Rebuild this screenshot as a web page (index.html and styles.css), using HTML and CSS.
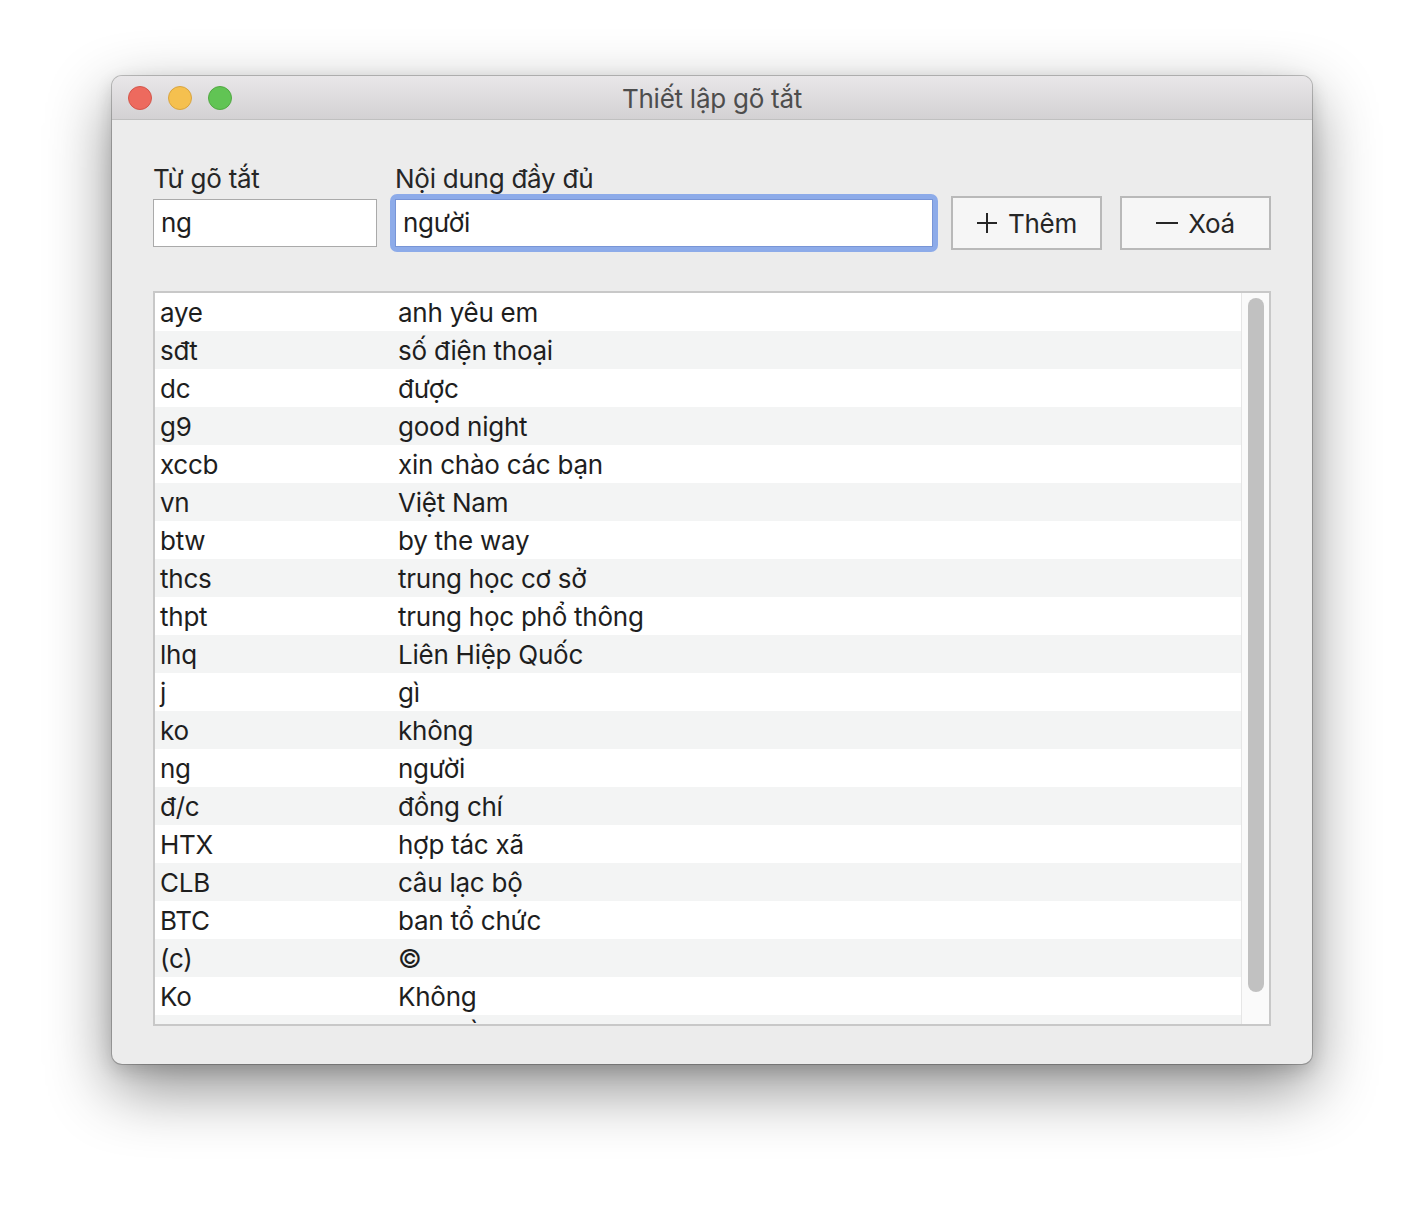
FILE: index.html
```html
<!DOCTYPE html>
<html lang="vi">
<head>
<meta charset="utf-8">
<title>Thiết lập gõ tắt</title>
<link rel="stylesheet" href="styles.css">
</head>
<body>
<div class="window">
  <div class="titlebar">
    <div class="lights">
      <span class="light red"></span>
      <span class="light yellow"></span>
      <span class="light green"></span>
    </div>
    <div class="title">Thiết lập gõ tắt</div>
  </div>
  <div class="content">
    <div class="form">
      <label class="label">Từ gõ tắt</label>
      <label class="label">Nội dung đầy đủ</label>
      <span></span>
      <span></span>
      <div class="input">ng</div>
      <div class="focus-ring"><div class="input focused">người</div></div>
      <button class="btn"><svg width="22" height="22" viewBox="0 0 22 22"><path d="M11 1V21M1 11H21" stroke="#262626" stroke-width="2" fill="none"/></svg><span>Thêm</span></button>
      <button class="btn"><svg width="22" height="22" viewBox="0 0 22 22"><path d="M0 11H22" stroke="#262626" stroke-width="2" fill="none"/></svg><span>Xoá</span></button>
    </div>
    <div class="list">
      <div class="rows">
        <div class="row"><span class="c1">aye</span><span>anh yêu em</span></div>
        <div class="row"><span class="c1">sđt</span><span>số điện thoại</span></div>
        <div class="row"><span class="c1">dc</span><span>được</span></div>
        <div class="row"><span class="c1">g9</span><span>good night</span></div>
        <div class="row"><span class="c1">xccb</span><span>xin chào các bạn</span></div>
        <div class="row"><span class="c1">vn</span><span>Việt Nam</span></div>
        <div class="row"><span class="c1">btw</span><span>by the way</span></div>
        <div class="row"><span class="c1">thcs</span><span>trung học cơ sở</span></div>
        <div class="row"><span class="c1">thpt</span><span>trung học phổ thông</span></div>
        <div class="row"><span class="c1">lhq</span><span>Liên Hiệp Quốc</span></div>
        <div class="row"><span class="c1">j</span><span>gì</span></div>
        <div class="row"><span class="c1">ko</span><span>không</span></div>
        <div class="row"><span class="c1">ng</span><span>người</span></div>
        <div class="row"><span class="c1">đ/c</span><span>đồng chí</span></div>
        <div class="row"><span class="c1">HTX</span><span>hợp tác xã</span></div>
        <div class="row"><span class="c1">CLB</span><span>câu lạc bộ</span></div>
        <div class="row"><span class="c1">BTC</span><span>ban tổ chức</span></div>
        <div class="row"><span class="c1">(c)</span><span>©</span></div>
        <div class="row"><span class="c1">Ko</span><span>Không</span></div>
        <div class="row"><span class="c1">vs</span><span>vợ chồng</span></div>
      </div>
      <div class="scrollbar"><div class="thumb"></div></div>
    </div>
  </div>
</div>
</body>
</html>
```

FILE: styles.css
```css
* { box-sizing: border-box; }
html, body { margin: 0; padding: 0; background: #ffffff; }
body {
  font-family: Inter, "Noto Sans", "Liberation Sans", sans-serif;
  font-size: 26px;
  letter-spacing: -0.25px;
  color: #262626;
  padding: 76px 0 0 112px;
  height: 1212px;
  overflow: hidden;
}
.window {
  width: 1200px;
  border-radius: 10px;
  overflow: hidden;
  background: #ececec;
  box-shadow: 0 0 0 1px rgba(0,0,0,0.22), 0 24px 64px rgba(0,0,0,0.45), 0 6px 18px rgba(0,0,0,0.14);
}
.titlebar {
  height: 44px;
  display: flex;
  align-items: center;
  position: relative;
  background: linear-gradient(#e9e7e9, #d3d1d3);
  border-bottom: 1px solid #c0c0c0;
}
.lights { display: flex; gap: 16px; padding-left: 16px; }
.light {
  width: 24px; height: 24px; border-radius: 50%;
  display: block;
}
.red { background: #ed6a5e; border: 1px solid #d3564b; }
.yellow { background: #f5c04f; border: 1px solid #d8a440; }
.green { background: #61c454; border: 1px solid #52a843; }
.title {
  position: absolute; left: 0; right: 0; top: 0; bottom: 0;
  display: flex; align-items: center; justify-content: center;
  color: #4d4d4d;
  font-size: 26px;
  padding-top: 1px;
  pointer-events: none;
}
.content { padding: 43px 41px 38px 41px; }
.form {
  display: grid;
  grid-template-columns: 224px 538px 151px 151px;
  grid-template-rows: 32px 48px;
  column-gap: 18px;
  row-gap: 4px;
}
.label { line-height: 32px; color: #262626; white-space: nowrap; }
.input {
  height: 48px;
  background: #fff;
  border: 1px solid #aaaaaa;
  padding: 0 7px;
  line-height: 46px;
  color: #1e1e1e;
}
.focus-ring {
  margin: -5px;
  padding: 5px;
  background: #8dabe9;
  border-radius: 7px;
}
.input.focused { border-color: #7895d6; }
.btn {
  align-self: center;
  height: 54px;
  margin: -3px 0 -3px 0;
  background: #f6f6f6;
  border: 2px solid #b9b9b9;
  font: inherit;
  letter-spacing: inherit;
  color: #262626;
  display: flex; align-items: center; justify-content: center;
  gap: 10px;
  padding: 0;
}
.btn svg { display: block; }
.list {
  margin-top: 44px;
  height: 735px;
  border: 2px solid #c8c8c8;
  background: #fff;
  display: flex;
  overflow: hidden;
}
.rows { flex: 1; overflow: hidden; }
.row {
  height: 38px;
  line-height: 39px;
  padding-left: 5px;
  display: flex;
  white-space: nowrap;
  color: #1e1e1e;
}
.row:nth-child(even) { background: #f3f4f4; }
.c1 { width: 238px; flex: none; }
.scrollbar {
  width: 28px;
  flex: none;
  background: #fafafa;
  border-left: 1px solid #e6e6e6;
  padding: 5px 0 0 6px;
}
.thumb {
  width: 16px;
  height: 694px;
  border-radius: 8px;
  background: #c1c1c1;
}
```
